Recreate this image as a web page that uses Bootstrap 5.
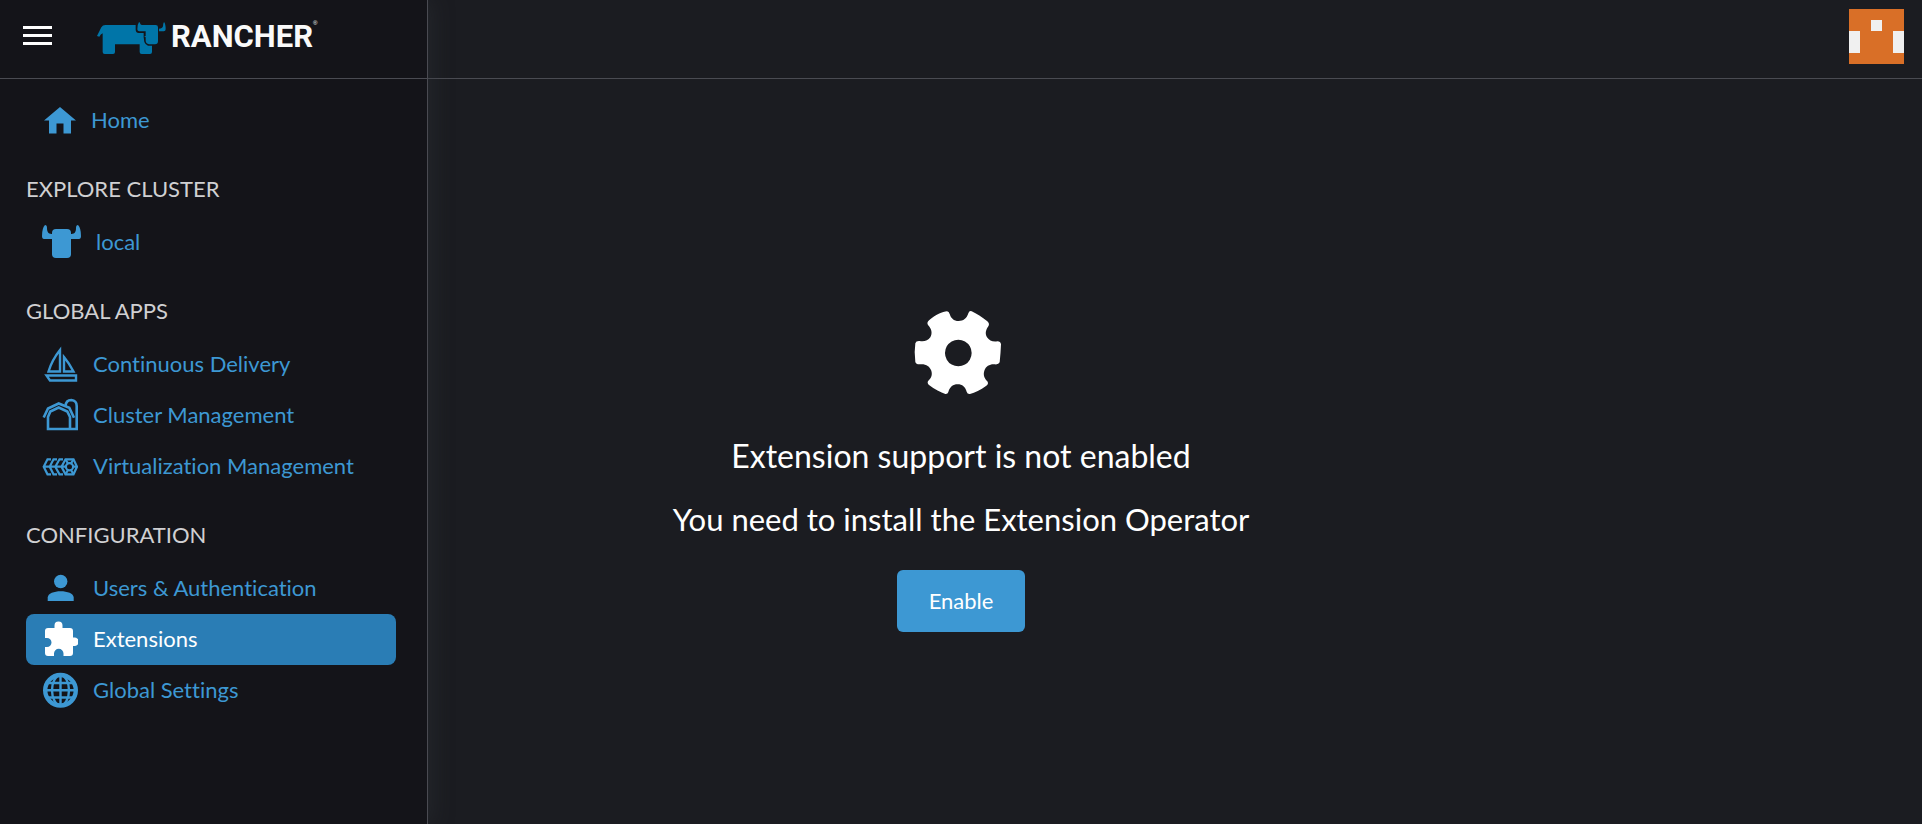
<!DOCTYPE html>
<html lang="en" data-bs-theme="dark">
<head>
<meta charset="utf-8">
<meta name="viewport" content="width=device-width, initial-scale=1">
<title>Rancher</title>
<link href="https://cdn.jsdelivr.net/npm/bootstrap@5.3.0/dist/css/bootstrap.min.css" rel="stylesheet">
<style>
  :root { --page: #1b1c21; --drawer: #141419; --line: #4a4b52; --accent: #3d98d3; }
  body { background: var(--page); font-family: Lato, "Open Sans", sans-serif; font-size: 22px; line-height: 30px; font-variant-ligatures: none; color: #fff; }
  /* The drawer shares the first column with the header and content, and lies over them. */
  .shell { display: grid; grid-template: 79px 1fr / 428px 1fr; }
  .topbar { grid-area: 1 / 1 / 2 / 3; border-bottom: 1px solid var(--line); padding: 0 18px 6px 0; }
  .content { grid-area: 2 / 1 / 3 / 3; padding-top: 36px; }
  .drawer { grid-area: 1 / 1 / 3 / 2; z-index: 2; background: var(--drawer); border-right: 1px solid var(--line); box-shadow: 4px 0 20px rgba(50, 54, 60, .4); }
  .drawer-head { height: 79px; border-bottom: 1px solid var(--line); padding: 0 23px 23px; gap: 45px; }
  .drawer-body { padding: 16px 31px 0 26px; }
  .brand-name { font: 700 31px/36px Roboto, sans-serif; color: #fafafa; }
  .reg { font: 6px/8px "Liberation Sans", sans-serif; }
  .section-title { font-size: 22px; line-height: 30px; font-weight: 400; color: #d0d0d2; padding: 28px 0 13px; margin: 0; }
  .item { height: 51px; border-radius: 8px; color: var(--accent); padding: 0 0 2px 16px; gap: 15px; }
  .item:hover { color: #6cb4e2; }
  .item.current { background: #2a7db5; color: #fff; }
  .item svg { width: 36px; height: 36px; flex: none; }
  .item .wide { width: 39px; }
  .home { gap: 13px; }
  .notice { font-size: 32px; line-height: 40px; }
  .hint { font-size: 31px; line-height: 38px; }
  .btn-enable { --bs-btn-color: #fff; --bs-btn-bg: var(--accent); --bs-btn-hover-color: #fff; --bs-btn-hover-bg: #2a7db5; --bs-btn-padding-x: 31px; --bs-btn-padding-y: 15px; --bs-btn-font-size: 22px; --bs-btn-line-height: 30px; --bs-btn-border-radius: 6px; --bs-btn-border-color: transparent; }
</style>
</head>
<body>
<div class="shell min-vh-100">
  <header class="topbar d-flex justify-content-end align-items-center">
    <button class="btn p-0 border-0 d-flex" type="button" aria-label="User menu">
      <svg width="55" height="55" viewBox="0 0 5 5" shape-rendering="crispEdges"><path fill="#d96f27" d="M0 0h5v5H0z"/><path fill="#f0f0f0" d="M2 1h1v1H2zM0 2h1v2H0zM4 2h1v2H4z"/></svg>
    </button>
  </header>

  <aside class="drawer">
    <div class="drawer-head d-flex align-items-end">
      <button class="btn p-0 border-0 d-flex mb-2" type="button" aria-label="Toggle menu">
        <svg width="29" height="29" viewBox="0 0 29 29" fill="#fff"><path d="M0 8h29v3H0zM0 16h29v3H0zM0 24h29v3H0z"/></svg>
      </button>
      <a class="d-flex align-items-end text-decoration-none text-white" href="#" aria-label="Rancher home">
        <svg class="me-1" width="70" height="34" viewBox="290 57 210 102" fill="#0075a8"><path d="M290 102L303 76Q307 69 315 69H406V84Q407 93 415 93H430V106L432 120Q435 128 443 131H455V150Q455 156 449 156H424Q418 156 418 150V127H344V150Q344 156 338 156H313Q307 156 307 150V94Q301 97 297 104Z"/><path d="M416 60Q420 61 420 66Q421 69 426 69H466Q473 69 473 76V118Q473 127 464 127H446Q436 124 436 116V106L431 102H436V88H417Q411 88 411 82Q411 67 416 60ZM491 60Q496 65 496 82Q496 88 490 88H476V80Q486 80 488 73Q488 64 491 60Z"/></svg>
        <span class="brand-name">RANCHER</span><span class="reg align-self-start">®</span>
      </a>
    </div>
    <nav class="drawer-body" aria-label="Main">
      <a class="item home d-flex align-items-center text-decoration-none" href="#">
        <svg viewBox="0 0 36 36" fill="currentColor"><path d="M18 5L34 18.500H29V31.500H21.500V21.500H14.500V31.500H7V18.500H2Z"/></svg>Home
      </a>

      <h2 class="section-title">EXPLORE CLUSTER</h2>
      <a class="item d-flex align-items-center text-decoration-none" href="#">
        <svg class="wide" viewBox="-1 0 39 36" fill="currentColor"><path d="M2 1Q4 1 4 4C4 9 6 10 10 10V15H1Q-1 15-1 12Q-1 4 2 1ZM35 1Q33 1 33 4C33 9 31 10 27 10V15H36Q38 15 38 12Q38 4 35 1Z"/><rect x="9" y="5" width="19" height="29" rx="4"/></svg>local
      </a>

      <h2 class="section-title">GLOBAL APPS</h2>
      <a class="item d-flex align-items-center text-decoration-none" href="#">
        <svg viewBox="0 0 36 36" fill="none" stroke="currentColor" stroke-width="2.400"><path d="M18 4V25.500H6.500Q10 14 18 4ZM22 11V25.500H31.500Q27 17 22 11ZM4.500 29.500H34V34.500H8Z"/></svg>Continuous Delivery
      </a>
      <a class="item d-flex align-items-center text-decoration-none" href="#">
        <svg viewBox="0 0 36 36" fill="none" stroke="currentColor" stroke-width="2.600"><path d="M1.700 20.500L6 11.500L16.700 6.500L27.300 10.800L32 20.800"/><path d="M6 32V20L8.300 14.500L16.700 10.500L25.300 14.500L28 20V32ZM23.500 9Q24 3 29.300 3Q34.700 3.500 34.700 9V32H28"/></svg>Cluster Management
      </a>
      <a class="item d-flex align-items-center text-decoration-none" href="#">
        <svg viewBox="0 0 36 36" fill="none" stroke="currentColor" stroke-width="2.200"><path d="M9 11.300H5.500L1.700 18.700L5.500 26.300H9M15 11.300H11.500L7.700 18.700L11.500 26.300H15M21 11.300H17.500L13.300 18.700L17.500 26.300H21M2 18.700H24M23.500 11.300H31.500L35 18.700L31.500 26.300H23.500L19.500 18.700Z"/><circle cx="27.500" cy="18.700" r="3.600"/><path d="M23.500 11.300L26 15.500M31.500 11.300L29 15.500M35 18.700H31M31.500 26.300L29 22M23.500 26.300L26 22"/></svg>Virtualization Management
      </a>

      <h2 class="section-title">CONFIGURATION</h2>
      <a class="item d-flex align-items-center text-decoration-none" href="#">
        <svg viewBox="0 0 36 36" fill="currentColor"><circle cx="18.700" cy="11.500" r="6.700"/><path d="M5.700 31V27.500C5.700 19 31.700 19 31.700 27.500V31Z"/></svg>Users &amp; Authentication
      </a>
      <a class="item current d-flex align-items-center text-decoration-none" href="#" aria-current="page">
        <svg viewBox="0 0 36 36" fill="currentColor"><path d="M6 7H12.500V4.500A4 4 0 0 1 20.500 4.500V7H28Q31 7 31 10V16.500H32.500A4 4 0 0 1 32.500 25H31V32Q31 35 28 35H21.500V32.500A4.500 4.500 0 0 0 12 32.500V35H6Q3 35 3 32V26H5A4.500 4.500 0 0 0 5 17H3V10Q3 7 6 7Z"/></svg>Extensions
      </a>
      <a class="item d-flex align-items-center text-decoration-none" href="#">
        <svg viewBox="0 0 36 36" fill="none" stroke="currentColor" stroke-width="2.400"><circle cx="18.500" cy="18.300" r="15.300" stroke-width="4.400"/><ellipse cx="18.500" cy="18.300" rx="8.500" ry="15"/><path d="M18.500 2V34M4 18.300H33M6 11H31M6 25.500H31"/></svg>Global Settings
      </a>
    </nav>
  </aside>

  <main class="content d-flex flex-column align-items-center justify-content-center text-center">
    <svg class="mb-4" width="100" height="88" viewBox="0 0 300 264"><path fill="#fff" fill-rule="evenodd" d="M108 10C96 10 72 22 55 36Q46 44 51 51C62 62 65 76 58 88C51 98 40 101 26 99Q15 98 13 106Q9 132 13 162Q15 169 25 169C45 167 55 174 61 188C65 202 60 210 52 218Q47 224 54 231C70 244 90 253 103 258Q110 259 112 252C117 236 126 229 140 229C154 229 163 237 167 251Q169 259 177 258C192 254 208 246 226 233Q234 228 229 220C220 210 216 201 220 188C225 173 239 167 252 169Q263 170 266 163Q269 135 270 109Q269 100 259 100C245 102 235 98 228 88C221 76 225 65 232 55Q237 48 229 40C213 27 197 17 182 10Q175 7 172 16C167 32 157 39 143 39C128 39 120 31 116 18Q114 10 108 10ZM142 95A40 40 0 1 1 141.900 95Z"/></svg>
    <p class="notice mt-3 mb-4">Extension support is not enabled</p>
    <p class="hint mb-4">You need to install the Extension Operator</p>
    <button class="btn btn-enable mt-2" type="button">Enable</button>
  </main>
</div>
<script src="https://cdn.jsdelivr.net/npm/bootstrap@5.3.0/dist/js/bootstrap.bundle.min.js"></script>
</body>
</html>
